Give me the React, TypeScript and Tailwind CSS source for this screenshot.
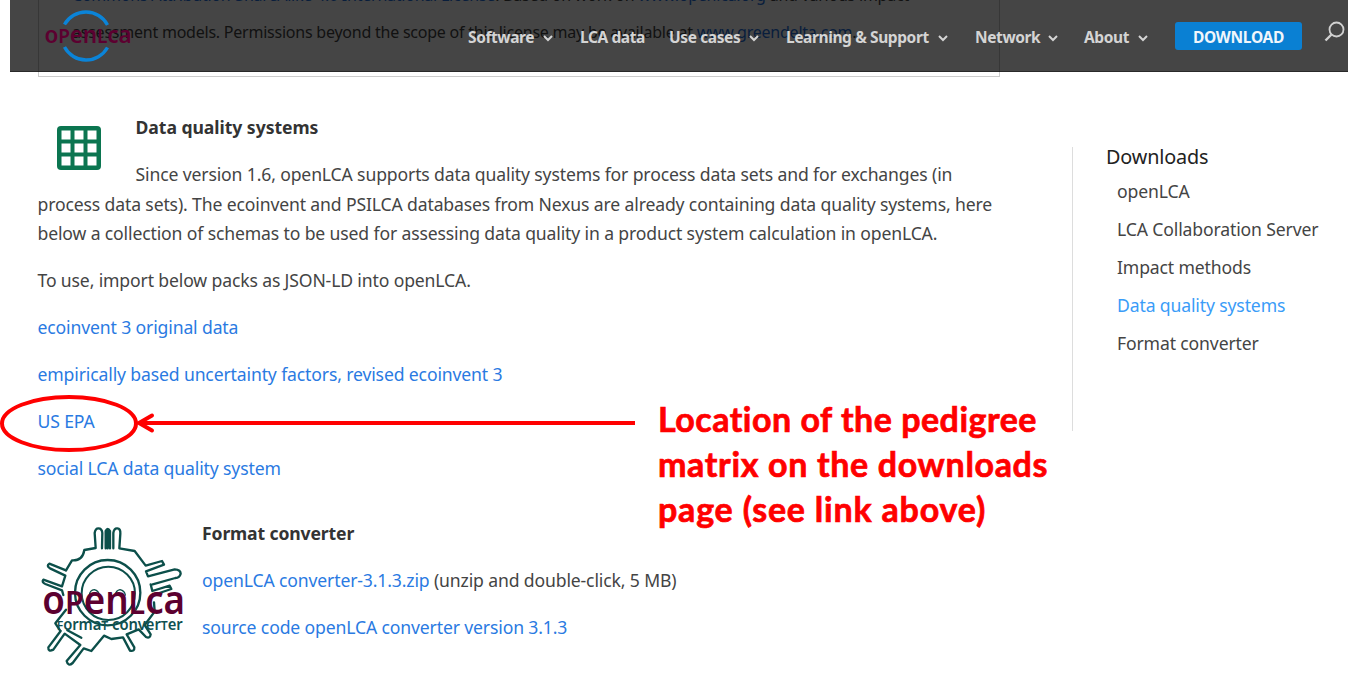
import React from "react";

const items: { label: string; arrow: boolean; box: string; text: string }[] = [
  { label: "Software", arrow: true, box: "w-[112px]", text: "w-[67px]" },
  { label: "LCA data", arrow: false, box: "w-[89px]", text: "w-[65px]" },
  { label: "Use cases", arrow: true, box: "w-[117px]", text: "w-[72px]" },
  { label: "Learning & Support", arrow: true, box: "w-[189px]", text: "w-[144px]" },
  { label: "Network", arrow: true, box: "w-[109px]", text: "w-[65px]" },
  { label: "About", arrow: true, box: "w-[91px]", text: "w-[46px]" },
];

const downloads = ["openLCA", "LCA Collaboration Server", "Impact methods", "Data quality systems", "Format converter"];

function Logo() {
  return (
    <svg className="h-[56px] w-[92px] shrink-0" viewBox="0 0 92 56">
      <g fill="none" stroke="#0b84d8" strokeWidth="3.4">
        <path d="M20.500 16.500A24.500 24.500 0 0 1 63.500 17" />
        <path d="M20.500 39A24.500 24.500 0 0 0 63.500 39.500" />
      </g>
      <text x="0.500" y="35" textLength="87" lengthAdjust="spacingAndGlyphs" fontFamily="Noto Sans" fontWeight="600" fontSize="23" fill="#5c0030">
        o<tspan fontSize="19.500">P</tspan>en<tspan fontSize="19.500">L</tspan>ca
      </text>
    </svg>
  );
}

function GridIcon() {
  return (
    <svg className="h-[44px] w-[44px]" viewBox="0 0 44 44">
      <rect width="44" height="44" rx="4" fill="#0b7550" />
      {[4.5, 17.500, 30.500].map((y) =>
        [4.5, 17.500, 30.500].map((x) => <rect key={`${x}-${y}`} x={x} y={y} width="9" height="9" fill="#fff" />),
      )}
    </svg>
  );
}

function ConverterLogo() {
  return (
    <svg className="h-[166px] w-[164px] shrink-0" viewBox="24 0 492 498">
      <g fill="none" stroke="#0c4f4a" strokeWidth="7" strokeLinejoin="round" strokeLinecap="round">
        <path d="M108 166L126 136Q158 138 163 105L197 99L194 54Q196 40 205 40Q216 40 217 54L216 100M227 100V48Q233 36 240 48V100M233 44V100M250 100V54Q252 39 262 40Q272 41 271 56L268 100L314 108L347 152L396 138L402 149L348 169L354 184L434 163Q452 164 452 176Q449 188 436 189L368 208M362 208L367 228L419 212L424 222L370 240M372 262L374 290" />
        <path d="M108 166L58 146Q48 152 60 160L106 182L96 214L40 194Q34 202 46 207L96 226L100 240M108 284L76 325L90 346M112 346L154 368" />
        <path d="M92 348L55 397Q54 412 70 404L104 356L151 390L110 438Q114 456 128 444L161 400L184 408L222 362L244 372L279 367L300 407Q314 410 313 397L290 358L326 343L348 366Q360 372 362 358L344 330L374 290" />
        <circle cx="233" cy="233" r="98" strokeWidth="7" />
        <circle cx="235" cy="235" r="80" strokeWidth="6" />
        <path d="M178 240Q180 225 193 224Q206 227 208 240M256 240Q258 226 270 224Q284 227 286 240" strokeWidth="4" />
        <path d="M186 239Q193 230 201 240M264 240Q270 231 278 240" strokeWidth="3" />
      </g>
      <text x="37" y="298" textLength="428" lengthAdjust="spacingAndGlyphs" fontFamily="Noto Sans" fontWeight="600" fontSize="117" fill="#5c0030">
        o<tspan fontSize="97">P</tspan>en<tspan fontSize="97">L</tspan>ca
      </text>
      <text x="80" y="345" textLength="378" lengthAdjust="spacingAndGlyphs" fontFamily="Noto Sans" fontWeight="600" fontSize="46" fill="#105050">
        <tspan fontSize="38">F</tspan>orma<tspan fontSize="38">T</tspan> conver<tspan fontSize="38">T</tspan>er
      </text>
    </svg>
  );
}

function Header() {
  return (
    <header className="absolute left-[10px] right-0 top-0 flex h-[72px] border-b border-black/40 bg-black/[0.73] pl-[34px] pt-[8px]">
      <Logo />
      <nav className="ml-[332px] flex h-[59px] items-center text-[15.500px] font-bold tracking-[-0.400px] text-[#d4d4d4]">
        {items.map((item) => (
          <div key={item.label} className={`flex shrink-0 items-center whitespace-nowrap ${item.box}`}>
            <span className={item.text}>{item.label}</span>
            {item.arrow && (
              <svg className="ml-[7px] mt-[1px] h-[8px] w-[12px] shrink-0" viewBox="0 0 12 8" fill="none" stroke="currentColor" strokeWidth="2">
                <path d="M2 2L6 6L10 2" />
              </svg>
            )}
          </div>
        ))}
      </nav>
      <a className="mt-[14px] flex h-[28px] w-[127px] shrink-0 items-center justify-center rounded-[3px] bg-[#0a80d3] pt-[3px] text-[15.500px] font-bold tracking-[-0.300px] text-[#f0f6fb]">
        DOWNLOAD
      </a>
      <svg className="ml-[22px] mt-[13px] h-[21px] w-[22px] shrink-0" viewBox="0 0 22 21" fill="none" stroke="#d0d0d0" strokeWidth="1.800">
        <circle cx="12.500" cy="8.500" r="7" />
        <path d="M7.500 13.500L1.500 19.500" strokeWidth="2.400" />
      </svg>
    </header>
  );
}

export default function App() {
  return (
    <div className="relative h-[681px] w-[1348px] overflow-hidden bg-white font-['Noto_Sans',sans-serif] text-[17.600px] leading-[29.500px] tracking-[-0.140px] text-[#444]">
      <div className="ml-[38px] flow-root h-[77px] w-[962px] whitespace-nowrap border-x border-b border-[#ccc] pl-[33px] text-[16px] tracking-[-0.230px]">
        <div className="-mt-[19px] h-[37px]">
          <span className="text-[#2470dd]">Commons Attribution-ShareAlike 4.0 International License</span>. Based on work on{" "}
          <span className="text-[#2470dd]">www.openlca.org</span> and various impact
        </div>
        <div>
          assessment models. Permissions beyond the scope of this license may be available at <span className="text-[#2470dd]">www.greendelta.com</span>.
        </div>
      </div>
      <div className="flex">
        <main className="w-[1072px] shrink-0 whitespace-nowrap pl-[37.500px] pt-[36px]">
          <section>
            <div className="flex">
              <div className="w-[98px] pl-[19.500px] pt-[13px]">
                <GridIcon />
              </div>
              <div>
                <h2 className="font-bold tracking-[-0.050px] text-[#333]">Data quality systems</h2>
                <p className="mt-[17.500px]">Since version 1.6, openLCA supports data quality systems for process data sets and for exchanges (in</p>
              </div>
            </div>
            <p>
              process data sets). The ecoinvent and PSILCA databases from Nexus are already containing data quality systems, here
              <br />
              below a collection of schemas to be used for assessing data quality in a product system calculation in openLCA.
            </p>
            <p className="mt-[17.500px]">To use, import below packs as JSON-LD into openLCA.</p>
            <div className="mt-[17px] flex flex-col gap-[17.500px] text-[#2a7ae2]">
              <a>ecoinvent 3 original data</a>
              <a>empirically based uncertainty factors, revised ecoinvent 3</a>
              <a>US EPA</a>
              <a>social LCA data quality system</a>
            </div>
          </section>
          <section className="mt-[32px] flex">
            <ConverterLogo />
            <div className="pl-[0.500px] pt-[4px]">
              <h2 className="font-bold text-[#333]">Format converter</h2>
              <p className="mt-[17.500px]">
                <a className="text-[#2a7ae2]">openLCA converter-3.1.3.zip</a> (unzip and double-click, 5 MB)
              </p>
              <p className="mt-[17.500px] text-[#2a7ae2]">source code openLCA converter version 3.1.3</p>
            </div>
          </section>
        </main>
        <aside className="mt-[70px] h-[284px] w-[270px] border-l border-[#ddd] pl-[33px]">
          <h3 className="mt-[-3px] text-[19.800px] leading-[26px] text-[#222]">Downloads</h3>
          <ul className="flex flex-col pl-[11px] pt-[2px] leading-[38px]">
            {downloads.map((d) => (
              <li key={d} className={d === "Data quality systems" ? "text-[#3a9cf8]" : ""}>
                {d}
              </li>
            ))}
          </ul>
        </aside>
      </div>
      <Header />
      <svg className="absolute left-0 top-[390px] h-[66px] w-[640px]" viewBox="0 0 640 66" fill="none" stroke="#f00" strokeWidth="4">
        <ellipse cx="69" cy="33.500" rx="67" ry="26.500" />
        <path d="M635 33H140" />
        <path d="M152 25.500L139 33L152 40.500" strokeLinecap="round" />
      </svg>
      <div className="absolute left-[658px] top-[396px] whitespace-nowrap font-['Lato',sans-serif] text-[34px] font-bold leading-[45px] text-[#f00] [-webkit-text-stroke:0.7px_#f00]">
        <div className="tracking-[0.500px]">Location of the pedigree</div>
        <div className="tracking-[0.650px]">matrix on the downloads</div>
        <div className="tracking-[0.800px]">page (see link above)</div>
      </div>
    </div>
  );
}
